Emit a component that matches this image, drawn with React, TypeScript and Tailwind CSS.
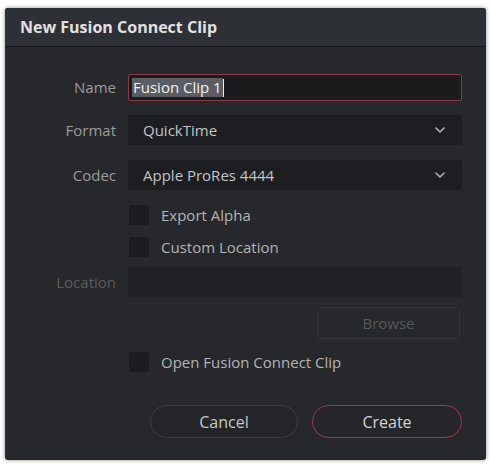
import React from "react";

const font = { fontFamily: '"Open Sans", "Noto Sans", sans-serif' };

function Chevron() {
  return (
    <svg width="12" height="8" viewBox="0 0 12 8" className="shrink-0">
      <path d="M2 2 L6 6 L10 2" fill="none" stroke="#b0b0b0" strokeWidth="1.6" strokeLinecap="round" strokeLinejoin="round" />
    </svg>
  );
}

function Row({ label, children, labelClass = "text-[#9c9c9c]", className = "" }: { label?: string; children: React.ReactNode; labelClass?: string; className?: string }) {
  return (
    <div className={"flex items-center " + className}>
      <div className={"w-[111px] shrink-0 text-right text-[15px] " + labelClass}>{label}</div>
      <div className="ml-[12px] w-[334px]">{children}</div>
    </div>
  );
}

function Check({ label, className = "" }: { label: string; className?: string }) {
  return (
    <Row className={className}>
      <div className="flex items-center h-[20px]">
        <div className="w-[20px] h-[20px] rounded-[2px] bg-[#1c1d20] ml-[1px]" />
        <span className="ml-[12px] text-[15px] text-[#b4b4b4]">{label}</span>
      </div>
    </Row>
  );
}

export default function App() {
  return (
    <div className="w-[490px] h-[465px] bg-white pt-[8px] pl-[5px]" style={font}>
      <div className="w-[481px] h-[452px] bg-[#26282c] rounded-[3px] shadow-[0_0_4px_rgba(0,0,0,0.45)] flex flex-col overflow-hidden">
        <div className="h-[39px] bg-[#2d3034] border-b border-[#18191b] flex items-center pl-[15px]">
          <span className="text-[16px] font-bold text-[#e2e2e2]">New Fusion Connect Clip</span>
        </div>
        <Row label="Name" className="mt-[27px]">
          <div className="h-[27px] border border-[#8c3a48] rounded-[2px] bg-[#1b1b1d] flex items-center pl-[3px]">
            <span className="bg-[#5a5d63] text-[#f2f2f2] text-[15px] leading-[19px] px-[1px]">Fusion Clip 1</span>
            <span className="w-[1.5px] h-[18px] bg-[#e8e8e8]" />
          </div>
        </Row>
        <Row label="Format" className="mt-[14px]">
          <div className="h-[30px] rounded-[2px] bg-[#1d1e21] flex items-center justify-between pl-[15px] pr-[16px]">
            <span className="text-[15px] text-[#c4c4c4]">QuickTime</span>
            <Chevron />
          </div>
        </Row>
        <Row label="Codec" className="mt-[15px]">
          <div className="h-[30px] rounded-[2px] bg-[#1d1e21] flex items-center justify-between pl-[15px] pr-[16px]">
            <span className="text-[15px] text-[#c4c4c4]">Apple ProRes 4444</span>
            <Chevron />
          </div>
        </Row>
        <Check label="Export Alpha" className="mt-[15px]" />
        <Check label="Custom Location" className="mt-[12px]" />
        <Row label="Location" labelClass="text-[#5c5d60]" className="mt-[10px]">
          <div className="h-[30px] rounded-[2px] bg-[#202124]" />
        </Row>
        <div className="flex justify-end pr-[26px] mt-[10px]">
          <div className="w-[143px] h-[32px] rounded-[4px] border border-[#323438] flex items-center justify-center text-[15px] text-[#58595c]">Browse</div>
        </div>
        <Check label="Open Fusion Connect Clip" className="mt-[13px]" />
        <div className="flex justify-end pr-[24px] mt-[33px] gap-[14px]">
          <div className="w-[148px] h-[33px] rounded-full border border-[#3c3e42] bg-[#232529] flex items-center justify-center text-[16px] text-[#c8c8c8]">Cancel</div>
          <div className="w-[150px] h-[33px] rounded-full border-[1.5px] border-[#9a3d4c] bg-[#24262a] flex items-center justify-center text-[16px] text-[#d4d4d4]">Create</div>
        </div>
      </div>
    </div>
  );
}
